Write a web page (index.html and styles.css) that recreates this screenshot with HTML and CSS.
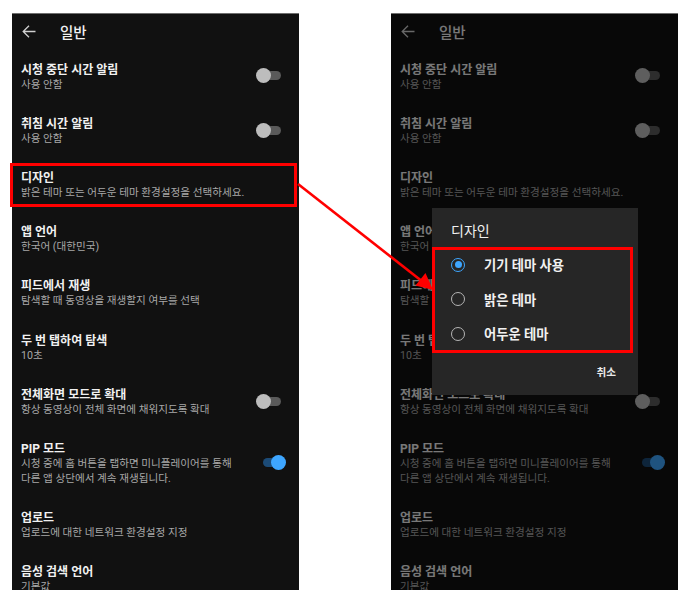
FILE: index.html
```html
<!DOCTYPE html>
<html lang="ko">
<head>
<meta charset="utf-8">
<title>일반 설정 - 디자인</title>
<link rel="stylesheet" href="styles.css">
</head>
<body>
<div class="canvas">
  <div class="phone">
    <div class="header">
      <span class="backbox"><svg class="back" width="14" height="13" viewBox="0 0 14 13"><path d="M13.5 6.5H1.2M7 0.8L1.2 6.5L7 12.2" fill="none" stroke="currentColor" stroke-width="1.3"/></svg></span>
      <span class="htitle">일반</span>
    </div>
    <div class="item"><div class="txt"><div class="t">시청 중단 시간 알림</div><div class="s">사용 안함</div></div><div class="sw"><span class="track"></span><span class="thumb"></span></div></div>
    <div class="item"><div class="txt"><div class="t">취침 시간 알림</div><div class="s">사용 안함</div></div><div class="sw"><span class="track"></span><span class="thumb"></span></div></div>
    <div class="item"><div class="txt"><div class="t">디자인</div><div class="s">밝은 테마 또는 어두운 테마 환경설정을 선택하세요.</div></div></div>
    <div class="item"><div class="txt"><div class="t">앱 언어</div><div class="s">한국어 (대한민국)</div></div></div>
    <div class="item"><div class="txt"><div class="t">피드에서 재생</div><div class="s">탐색할 때 동영상을 재생할지 여부를 선택</div></div></div>
    <div class="item"><div class="txt"><div class="t">두 번 탭하여 탐색</div><div class="s">10초</div></div></div>
    <div class="item"><div class="txt"><div class="t">전체화면 모드로 확대</div><div class="s">항상 동영상이 전체 화면에 채워지도록 확대</div></div><div class="sw"><span class="track"></span><span class="thumb"></span></div></div>
    <div class="item"><div class="txt"><div class="t">PIP 모드</div><div class="s">시청 중에 홈 버튼을 탭하면 미니플레이어를 통해<br>다른 앱 상단에서 계속 재생됩니다.</div></div><div class="sw on"><span class="track"></span><span class="thumb"></span></div></div>
    <div class="item"><div class="txt"><div class="t">업로드</div><div class="s">업로드에 대한 네트워크 환경설정 지정</div></div></div>
    <div class="item"><div class="txt"><div class="t">음성 검색 언어</div><div class="s">기본값</div></div></div>
  </div>

  <div class="phone">
    <div class="header">
      <span class="backbox"><svg class="back" width="14" height="13" viewBox="0 0 14 13"><path d="M13.5 6.5H1.2M7 0.8L1.2 6.5L7 12.2" fill="none" stroke="currentColor" stroke-width="1.3"/></svg></span>
      <span class="htitle">일반</span>
    </div>
    <div class="item"><div class="txt"><div class="t">시청 중단 시간 알림</div><div class="s">사용 안함</div></div><div class="sw"><span class="track"></span><span class="thumb"></span></div></div>
    <div class="item"><div class="txt"><div class="t">취침 시간 알림</div><div class="s">사용 안함</div></div><div class="sw"><span class="track"></span><span class="thumb"></span></div></div>
    <div class="item"><div class="txt"><div class="t">디자인</div><div class="s">밝은 테마 또는 어두운 테마 환경설정을 선택하세요.</div></div></div>
    <div class="item"><div class="txt"><div class="t">앱 언어</div><div class="s">한국어 (대한민국)</div></div></div>
    <div class="item"><div class="txt"><div class="t">피드에서 재생</div><div class="s">탐색할 때 동영상을 재생할지 여부를 선택</div></div></div>
    <div class="item"><div class="txt"><div class="t">두 번 탭하여 탐색</div><div class="s">10초</div></div></div>
    <div class="item"><div class="txt"><div class="t">전체화면 모드로 확대</div><div class="s">항상 동영상이 전체 화면에 채워지도록 확대</div></div><div class="sw"><span class="track"></span><span class="thumb"></span></div></div>
    <div class="item"><div class="txt"><div class="t">PIP 모드</div><div class="s">시청 중에 홈 버튼을 탭하면 미니플레이어를 통해<br>다른 앱 상단에서 계속 재생됩니다.</div></div><div class="sw on"><span class="track"></span><span class="thumb"></span></div></div>
    <div class="item"><div class="txt"><div class="t">업로드</div><div class="s">업로드에 대한 네트워크 환경설정 지정</div></div></div>
    <div class="item"><div class="txt"><div class="t">음성 검색 언어</div><div class="s">기본값</div></div></div>

    <div class="scrim"></div>
    <div class="dialog">
      <div class="dtitle">디자인</div>
      <div class="opt"><span class="radio sel"></span><span class="olabel">기기 테마 사용</span></div>
      <div class="opt"><span class="radio"></span><span class="olabel">밝은 테마</span></div>
      <div class="opt"><span class="radio"></span><span class="olabel">어두운 테마</span></div>
      <div class="dactions"><span class="cancel">취소</span></div>
    </div>
  </div>

  <svg class="annot" width="689" height="596" viewBox="0 0 689 596">
    <rect x="11.5" y="164.5" width="284" height="41" fill="none" stroke="#ff0000" stroke-width="3"/>
    <rect x="433.5" y="248.5" width="198" height="103" fill="none" stroke="#ff0000" stroke-width="3"/>
    <line x1="298" y1="184" x2="423" y2="282" stroke="#ff0000" stroke-width="2.6"/>
    <polygon points="433,290 415.5,285.5 425.5,273" fill="#ff0000"/>
  </svg>
</div>
</body>
</html>
```

FILE: styles.css
```css
html, body {
  margin: 0;
  padding: 0;
  background: #ffffff;
}

body {
  font-family: Roboto, "Noto Sans CJK KR", sans-serif;
  width: 689px;
  height: 596px;
  overflow: hidden;
}

.canvas {
  position: relative;
  width: 689px;
  height: 596px;
  display: flex;
  gap: 92px;
  padding: 13px 0 0 12px;
  box-sizing: border-box;
}

.phone {
  position: relative;
  width: 287px;
  height: 577px;
  background: #111111;
  border-top: 1px solid #6e6e6e;
  box-sizing: border-box;
  overflow: hidden;
  flex: none;
}

.header {
  height: 35.5px;
  display: flex;
  align-items: center;
  padding-left: 10px;
  padding-bottom: 0.5px;
  color: #d0d0d0;
}

.backbox {
  width: 38px;
  flex: none;
  display: flex;
  align-items: center;
}

.back {
  display: block;
}

.htitle {
  font-size: 14.5px;
  font-weight: 500;
  color: #f1f1f1;
}

.item {
  display: flex;
  align-items: center;
  justify-content: space-between;
  padding: 11.7px 13px 12px 9px;
}

.t {
  font-size: 12px;
  line-height: 16px;
  font-weight: 700;
  color: #f1f1f1;
}

.s {
  font-size: 10.6px;
  line-height: 14.5px;
  color: #a8a8a8;
}

.sw {
  position: relative;
  width: 30px;
  height: 15px;
  flex: none;
  margin-top: -2px;
}

.track {
  position: absolute;
  left: 5px;
  top: 3px;
  width: 20px;
  height: 9px;
  border-radius: 5px;
  background: #5a5a5a;
}

.thumb {
  position: absolute;
  left: 0;
  top: 0;
  width: 15px;
  height: 15px;
  border-radius: 50%;
  background: #bdbdbd;
}

.sw.on .track {
  left: 7px;
  background: #1c4b77;
}

.sw.on .thumb {
  left: auto;
  right: 0;
  background: #3ea6ff;
}

.scrim {
  position: absolute;
  inset: 0;
  background: rgba(0, 0, 0, 0.5);
}

.dialog {
  position: absolute;
  left: 41px;
  top: 194px;
  width: 206px;
  height: 187px;
  background: #262626;
  box-sizing: border-box;
  padding-top: 14px;
}

.dtitle {
  padding-left: 19px;
  font-size: 14px;
  line-height: 18px;
  color: #f1f1f1;
}

.opt {
  display: flex;
  align-items: center;
  height: 34.5px;
  padding-left: 19px;
}

.dtitle + .opt {
  margin-top: 7.5px;
}

.radio {
  width: 14px;
  height: 14px;
  border-radius: 50%;
  border: 1.6px solid #b5b5b5;
  box-sizing: border-box;
  position: relative;
  flex: none;
}

.radio.sel {
  border-color: #3ea6ff;
}

.radio.sel::after {
  content: "";
  position: absolute;
  left: 50%;
  top: 50%;
  width: 7px;
  height: 7px;
  margin: -3.5px 0 0 -3.5px;
  border-radius: 50%;
  background: #3ea6ff;
}

.olabel {
  margin-left: 19px;
  font-size: 13.3px;
  font-weight: 700;
  color: #f1f1f1;
}

.dactions {
  display: flex;
  justify-content: flex-end;
  padding: 13px 22px 0 0;
}

.cancel {
  font-size: 10.6px;
  font-weight: 700;
  color: #e8e8e8;
}

.annot {
  position: absolute;
  left: 0;
  top: 0;
  pointer-events: none;
}
```
